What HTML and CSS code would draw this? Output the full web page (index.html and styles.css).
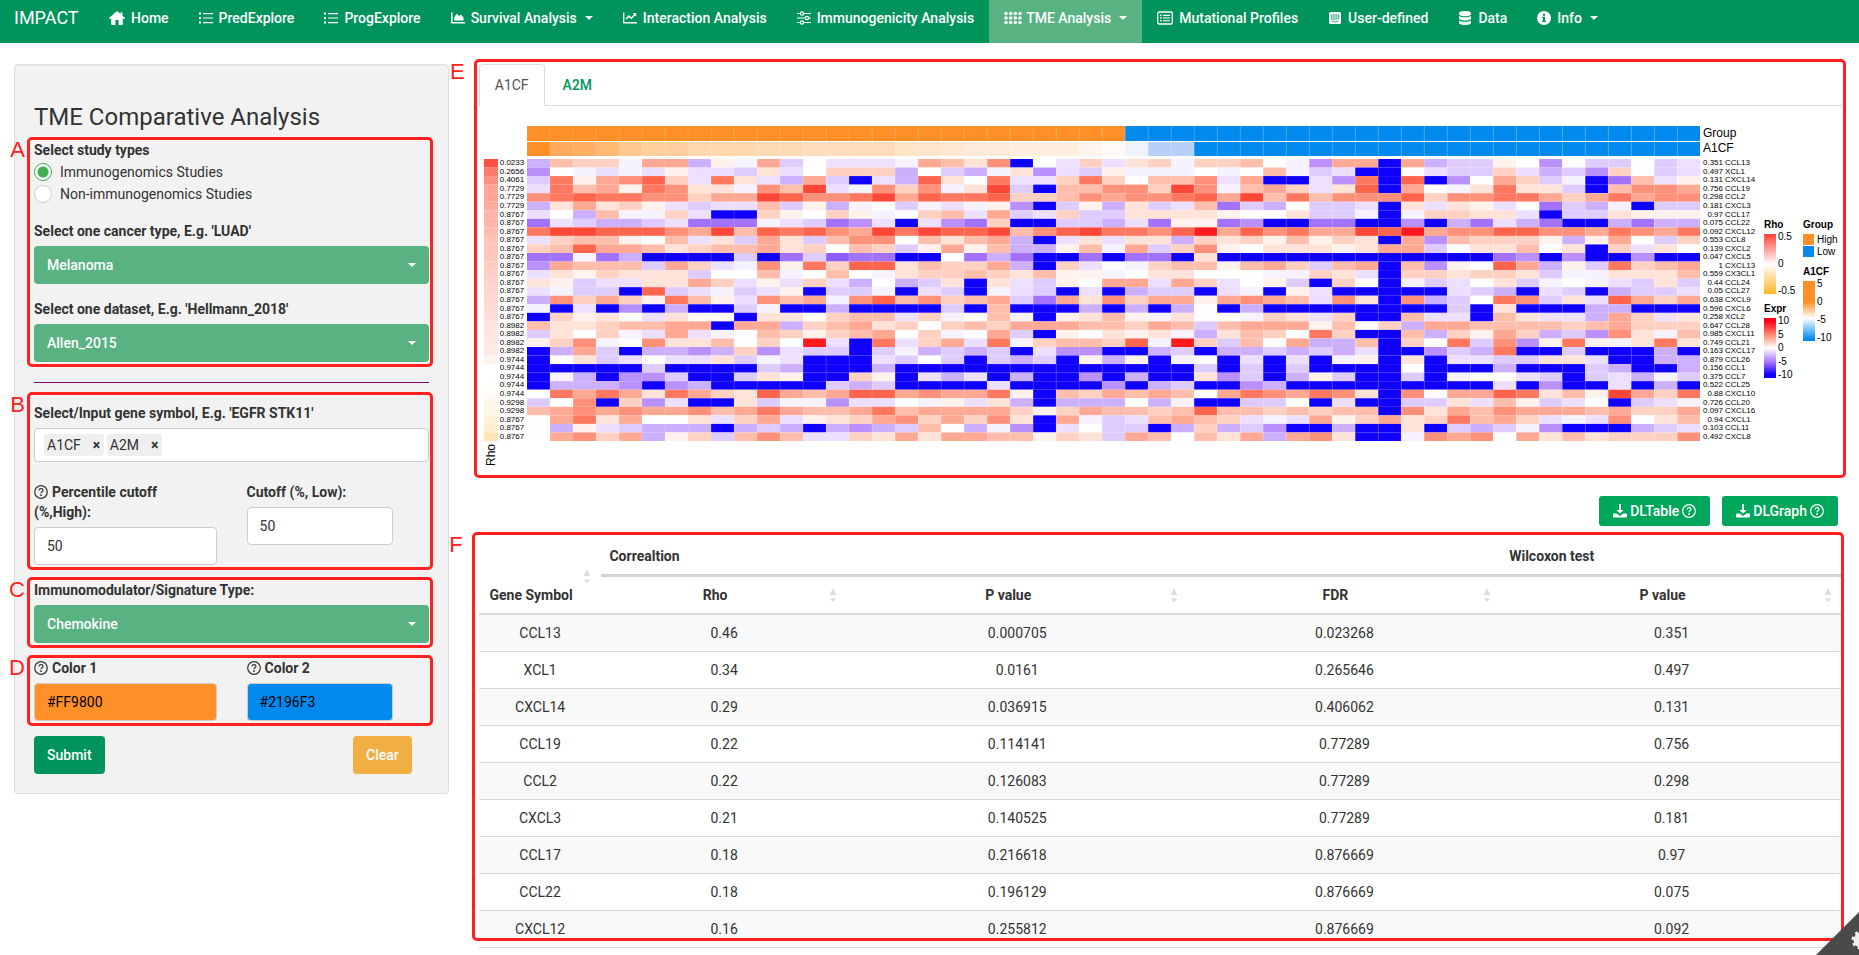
FILE: index.html
```html
<!DOCTYPE html>
<html lang="en">
<head>
<meta charset="utf-8">
<title>IMPACT - TME Comparative Analysis</title>
<link rel="stylesheet" href="styles.css">
</head>
<body>
<svg class="sprite" aria-hidden="true">
  <symbol id="i-home" viewBox="0 0 16 14"><path d="M8 0 0 7l1 1.2 1.2-1V13c0 .6.3 1 .9 1h3.3V9.6c0-.3.2-.5.5-.5h2.2c.3 0 .5.2.5.5V14h3.3c.6 0 .9-.4.9-1V7.200l1.200 1L16 7l-2.600-2.300V1.200h-1.800v1.900z"/></symbol>
  <symbol id="i-list" viewBox="0 0 14 14"><path d="M0 1.500h2v2H0zM4 2h10v1.200H4zM0 6h2v2H0zM4 6.400h10v1.200H4zM0 10.500h2v2H0zM4 11h10v1.200H4z"/></symbol>
  <symbol id="i-area" viewBox="0 0 14 14"><path d="M0 1.500h1.600v9.400H14v1.600H1c-.6 0-1-.4-1-1zM3.200 9.600V6.200l2.600-3.400 2.300 2.300 1.800-1.500 2.600 2.800v3.200z"/></symbol>
  <symbol id="i-line" viewBox="0 0 14 14"><path d="M0 1.500h1.400v9.600H14v1.400H1c-.6 0-1-.4-1-1z"/><path d="m3.200 8 2.600-3 2.400 2.200 4-4" fill="none" stroke="currentColor" stroke-width="1.500"/><path d="M9.800 2h3.400v3.400z"/></symbol>
  <symbol id="i-sliders" viewBox="0 0 14 14"><path d="M0 2.500h14M0 7h14M0 11.500h14" stroke="currentColor" stroke-width="1.200"/><g fill="#00945c" stroke="currentColor" stroke-width="1.200"><circle cx="5" cy="2.500" r="1.600"/><circle cx="10" cy="7" r="1.600"/><circle cx="5" cy="11.500" r="1.600"/></g></symbol>
  <symbol id="i-dots" viewBox="0 0 18 14"><path d="M2.200 2.500h14M2.200 7h14M2.200 11.500h14" transform="translate(-.2)" stroke="currentColor" stroke-width="3.600" stroke-linecap="round" stroke-dasharray="0 4.660"/></symbol>
  <symbol id="i-card" viewBox="0 0 16 14"><rect x=".7" y="1" width="14.600" height="12" rx="1.600" fill="none" stroke="currentColor" stroke-width="1.300"/><path d="M3 3.600h1.600v1.500H3zM6 3.800h7v1.100H6zM3 6.300h1.600v1.500H3zM6 6.500h7v1.100H6zM3 9h1.600v1.500H3zM6 9.200h7v1.100H6z"/></symbol>
  <symbol id="i-user" viewBox="0 0 12 14"><rect y="1" width="12" height="12" rx="1.600"/><path d="M2.400 3.500v5M4.200 3v6M6 3v6M7.800 3v6M9.600 3.500v5M2.500 10q3.500 2 7 0" fill="none" stroke="#00945c" stroke-width=".8"/></symbol>
  <symbol id="i-db" viewBox="0 0 12 14"><path d="M6 0c3.300 0 6 .9 6 2v1.200c0 1.100-2.700 2-6 2s-6-.9-6-2V2c0-1.100 2.700-2 6-2zM0 5c1.300.9 3.600 1.300 6 1.300S10.700 5.900 12 5v2.600c0 1.100-2.700 2-6 2s-6-.9-6-2zm0 4.400c1.300.9 3.600 1.300 6 1.300s4.700-.4 6-1.300V12c0 1.100-2.700 2-6 2s-6-.9-6-2z"/></symbol>
  <symbol id="i-info" viewBox="0 0 14 14"><circle cx="7" cy="7" r="7"/><path d="M6 2.700h2v2H6zM5.200 5.800H8v3.900h.9V11H5.100V9.700H6V7.100h-.8z" fill="#00945c"/></symbol>
  <symbol id="i-help" viewBox="0 0 14 14"><circle cx="7" cy="7" r="6.300" fill="none" stroke="currentColor" stroke-width="1.200"/><path d="M5 5.500c.1-1.200.9-1.800 2-1.800s2 .7 2 1.600c0 1.400-2 1.400-2 2.900" fill="none" stroke="currentColor" stroke-width="1.200"/><circle cx="7" cy="10.200" r=".9"/></symbol>
  <symbol id="i-down" viewBox="0 0 14 14"><path d="M6.100 0h1.800v6h2.700L7 9.700 3.400 6h2.700z"/><path d="M.8 9.500h2.700L7 12l3.500-2.500h2.700c.5 0 .8.300.8.800v2.500c0 .5-.3.800-.8.800H.8c-.5 0-.8-.3-.8-.8v-2.500c0-.5.300-.8.800-.8z"/></symbol>
  <symbol id="i-sort" viewBox="0 0 8 14"><path d="M4 0l3.500 7h-7zM.5 10.500h7L4 14z"/></symbol>
</svg>

<nav class="navbar">
  <a class="brand" href="#">IMPACT</a>
  <a class="nav-item" href="#"><svg class="ico wide"><use href="#i-home"/></svg>Home</a>
  <a class="nav-item" href="#"><svg class="ico"><use href="#i-list"/></svg>PredExplore</a>
  <a class="nav-item" href="#"><svg class="ico"><use href="#i-list"/></svg>ProgExplore</a>
  <a class="nav-item" href="#"><svg class="ico"><use href="#i-area"/></svg>Survival Analysis<span class="caret"></span></a>
  <a class="nav-item" href="#"><svg class="ico"><use href="#i-line"/></svg>Interaction Analysis</a>
  <a class="nav-item" href="#"><svg class="ico"><use href="#i-sliders"/></svg>Immunogenicity Analysis</a>
  <a class="nav-item active" href="#"><svg class="ico dots"><use href="#i-dots"/></svg>TME Analysis<span class="caret"></span></a>
  <a class="nav-item" href="#"><svg class="ico wide"><use href="#i-card"/></svg>Mutational Profiles</a>
  <a class="nav-item" href="#"><svg class="ico"><use href="#i-user"/></svg>User-defined</a>
  <a class="nav-item" href="#"><svg class="ico"><use href="#i-db"/></svg>Data</a>
  <a class="nav-item" href="#"><svg class="ico"><use href="#i-info"/></svg>Info<span class="caret"></span></a>
</nav>

<div class="page">
  <form class="sidebar" onsubmit="return false">
    <h1 class="title">TME Comparative Analysis</h1>

    <section class="block studies">
      <fieldset class="radios">
        <legend class="label">Select study types</legend>
        <label class="radio"><input type="radio" name="study" checked>Immunogenomics Studies</label>
        <label class="radio"><input type="radio" name="study">Non-immunogenomics Studies</label>
      </fieldset>
      <div class="field">
        <label class="label" for="cancer">Select one cancer type, E.g. 'LUAD'</label>
        <div class="select-wrap"><select id="cancer" class="select"><option>Melanoma</option></select></div>
      </div>
      <div class="field">
        <label class="label" for="dataset">Select one dataset, E.g. 'Hellmann_2018'</label>
        <div class="select-wrap"><select id="dataset" class="select"><option>Allen_2015</option></select></div>
      </div>
      <div class="callout"><span class="mark">A</span></div>
    </section>

    <hr class="rule">

    <section class="block genes">
      <div class="field">
        <label class="label" for="gene">Select/Input gene symbol, E.g. 'EGFR STK11'</label>
        <div class="chips">
          <span class="chip">A1CF<button type="button" class="chip-x">×</button></span>
          <span class="chip">A2M<button type="button" class="chip-x">×</button></span>
          <input id="gene" class="chip-input" type="text">
        </div>
      </div>
      <div class="pair cutoffs">
        <div><label class="label" for="high"><svg class="ico help"><use href="#i-help"/></svg>Percentile cutoff (%,High):</label><input id="high" class="input" type="text" value="50"></div>
        <div><label class="label" for="low">Cutoff (%, Low):</label><input id="low" class="input" type="text" value="50"></div>
      </div>
      <div class="callout tall"><span class="mark">B</span></div>
    </section>

    <section class="block">
      <label class="label" for="sig">Immunomodulator/Signature Type:</label>
      <div class="select-wrap"><select id="sig" class="select"><option>Chemokine</option></select></div>
      <div class="callout"><span class="mark">C</span></div>
    </section>

    <section class="block">
      <div class="pair">
        <div><label class="label" for="c1"><svg class="ico help"><use href="#i-help"/></svg>Color 1</label><input id="c1" class="input orange" type="text" value="#FF9800"></div>
        <div><label class="label" for="c2"><svg class="ico help"><use href="#i-help"/></svg>Color 2</label><input id="c2" class="input blue" type="text" value="#2196F3"></div>
      </div>
      <div class="callout"><span class="mark">D</span></div>
    </section>

    <div class="actions">
      <button class="btn submit" type="submit">Submit</button>
      <button class="btn clear" type="reset">Clear</button>
    </div>
  </form>

  <main class="main">
    <section class="plot">
      <div class="tabs"><a class="tab active" href="#">A1CF</a><a class="tab" href="#">A2M</a></div>
      <div class="chart">
        <div class="bands"><svg id="bands" viewBox="0 0 51 30" preserveAspectRatio="none"></svg></div>
        <div class="band-labels"><span>Group</span><span>A1CF</span></div>
        <div class="rho-strip"><svg id="rho" viewBox="0 0 1 33" preserveAspectRatio="none"></svg></div>
        <div class="fdr rows" id="fdr"></div>
        <div class="matrix"><svg id="matrix" viewBox="0 0 51 33" preserveAspectRatio="none"></svg></div>
        <div class="genes-col rows" id="names"></div>
        <div class="rho-label">Rho</div>
        <div class="legends">
          <div>
            <h2 class="lg-title">Rho</h2>
            <div class="scale"><div class="bar bar-rho"></div><div class="ticks"><span>0.5</span><span>0</span><span>-0.5</span></div></div>
            <h2 class="lg-title second">Expr</h2>
            <div class="scale"><div class="bar bar-expr"></div><div class="ticks"><span>10</span><span>5</span><span>0</span><span>-5</span><span>-10</span></div></div>
          </div>
          <div>
            <h2 class="lg-title">Group</h2>
            <div class="key"><i class="sw orange"></i>High</div>
            <div class="key"><i class="sw blue"></i>Low</div>
            <h2 class="lg-title second">A1CF</h2>
            <div class="scale"><div class="bar bar-gene"></div><div class="ticks"><span>5</span><span>0</span><span>-5</span><span>-10</span></div></div>
          </div>
        </div>
      </div>
      <div class="callout plot-box"><span class="mark">E</span></div>
    </section>

    <div class="downloads">
      <button class="dl" type="button"><svg class="ico"><use href="#i-down"/></svg>DLTable<svg class="ico"><use href="#i-help"/></svg></button>
      <button class="dl" type="button"><svg class="ico"><use href="#i-down"/></svg>DLGraph<svg class="ico"><use href="#i-help"/></svg></button>
    </div>

    <section class="results">
      <table class="table">
        <colgroup><col class="w-gene"><col class="w-rho"><col class="w-p"><col class="w-fdr"><col class="w-wp"></colgroup>
        <thead>
          <tr><th rowspan="2" class="bottom">Gene Symbol<svg class="sort"><use href="#i-sort"/></svg></th><th colspan="3" class="group">Correaltion</th><th class="group">Wilcoxon test</th></tr>
          <tr><th>Rho<svg class="sort"><use href="#i-sort"/></svg></th><th>P value<svg class="sort"><use href="#i-sort"/></svg></th><th>FDR<svg class="sort"><use href="#i-sort"/></svg></th><th>P value<svg class="sort"><use href="#i-sort"/></svg></th></tr>
        </thead>
        <tbody>
          <tr><td>CCL13</td><td>0.46</td><td>0.000705</td><td>0.023268</td><td>0.351</td></tr>
          <tr><td>XCL1</td><td>0.34</td><td>0.0161</td><td>0.265646</td><td>0.497</td></tr>
          <tr><td>CXCL14</td><td>0.29</td><td>0.036915</td><td>0.406062</td><td>0.131</td></tr>
          <tr><td>CCL19</td><td>0.22</td><td>0.114141</td><td>0.77289</td><td>0.756</td></tr>
          <tr><td>CCL2</td><td>0.22</td><td>0.126083</td><td>0.77289</td><td>0.298</td></tr>
          <tr><td>CXCL3</td><td>0.21</td><td>0.140525</td><td>0.77289</td><td>0.181</td></tr>
          <tr><td>CCL17</td><td>0.18</td><td>0.216618</td><td>0.876669</td><td>0.97</td></tr>
          <tr><td>CCL22</td><td>0.18</td><td>0.196129</td><td>0.876669</td><td>0.075</td></tr>
          <tr><td>CXCL12</td><td>0.16</td><td>0.255812</td><td>0.876669</td><td>0.092</td></tr>
        </tbody>
      </table>
      <div class="callout table-box"><span class="mark">F</span></div>
    </section>
  </main>
</div>

<svg class="corner" viewBox="0 0 43 43"><path d="M43 0v43H0z" fill="#4a4a4a"/><circle cx="45" cy="28" r="7.500" fill="#f0f0f0"/><circle cx="45" cy="28" r="8" fill="none" stroke="#f0f0f0" stroke-width="3" stroke-dasharray="3.140"/></svg>

<script src="chart.js"></script>
</body>
</html>
```
FILE: styles.css
```css
* { box-sizing: border-box; }
body { margin: 0; background: #fff; color: #333; font: 14px/20px Roboto, "Noto Sans", sans-serif; }
a { text-decoration: none; }
button, input, select { font: inherit; }
.sprite { position: absolute; width: 0; height: 0; }
.ico { width: 14px; height: 14px; fill: currentColor; flex: none; overflow: visible; }
.ico.wide { width: 16px; }
.ico.dots { width: 18px; }

/* navigation */
.navbar { display: flex; height: 43px; background: #00945c; color: #fff; }
.brand { width: 94px; padding: 8px 0 0 14px; color: #fff; font-size: 18px; }
.nav-item { display: flex; align-items: center; gap: 6px; height: 43px; padding: 0 15px 7px; color: #fff; font-weight: 500; white-space: nowrap; }
.nav-item.active { background: #58b282; }
.nav-item .dots { margin-right: -2px; }
.caret { border: 4px solid transparent; border-top-color: currentColor; border-bottom: 0; margin-left: 2px; }

.page { display: grid; grid-template-columns: 435fr 1364fr; gap: 30px; align-items: start; padding: 21px 17px 0 14px; }

/* sidebar form */
.sidebar { padding: 19px; border: 1px solid #ddd; border-radius: 4px; background: #f2f2f2; box-shadow: inset 0 1px 1px rgba(0, 0, 0, .05); }
.title { margin: 20px 0 10px; font-size: 24px; line-height: 26px; font-weight: 400; }
.block { position: relative; margin-bottom: 15px; }
.field { margin-bottom: 15px; }
.studies .field:last-of-type { margin-bottom: 0; }
.label { display: block; margin-bottom: 5px; padding: 0; font-weight: 700; }
.radios { margin: 0 0 15px; padding: 0; border: 0; }
.radios .label { margin-bottom: 2px; }
.radio { display: flex; align-items: center; gap: 8px; height: 20px; margin-bottom: 2px; }
.radio input { appearance: none; width: 18px; height: 18px; margin: 0; border: 1px solid #ccc; border-radius: 50%; background: #fff; }
.radio input:checked { border: 1px solid #43ac54; background: radial-gradient(circle, #43ac54 5px, #fff 6px); }
.select-wrap { position: relative; }
.select-wrap::after { content: ""; position: absolute; right: 13px; top: 17px; border: 4px solid transparent; border-top-color: #fff; border-bottom: 0; pointer-events: none; }
.select { appearance: none; display: block; width: 100%; height: 38px; padding: 0 13px; border: 0; border-radius: 4px; background: #58b282; color: #fff; font-weight: 500; }
.rule { margin: 20px 0; border: 0; border-top: 1px solid #800080; }
.chips { display: flex; gap: 3px; height: 34px; padding: 5px 9px; border: 1px solid #ccc; border-radius: 4px; background: #fff; }
.chip { display: flex; align-items: center; gap: 11px; height: 22px; padding: 0 3px; border-radius: 3px; background: #efefef; }
.chip-x { padding: 0; width: 9px; border: 0; background: none; color: #333; font-weight: 700; line-height: 20px; }
.chip-input { flex: 1; min-width: 0; border: 0; outline: 0; }
.genes .field { margin-bottom: 20px; }
.pair { display: grid; grid-template-columns: 183fr 147fr; gap: 30px; margin-right: 9%; }
.help { margin-right: 4px; vertical-align: -2px; }
.input { display: block; width: 100%; height: 38px; padding: 0 12px; border: 1px solid #ccc; border-radius: 4px; background: #fff; color: #333; }
.orange { background: #ff9028; color: #000; }
.blue { background: #008aee; color: #000; }
.actions { display: flex; justify-content: space-between; padding-right: 17px; }
.btn { height: 38px; padding: 0 13px; border: 0; border-radius: 4px; color: #fff; font-weight: 500; }
.submit { background: #00945c; }
.clear { background: #f0ae43; }

/* red annotation frames */
.callout { position: absolute; inset: -3px -4px -5px -7px; border: 3px solid #ff2020; border-radius: 5px; pointer-events: none; }
.callout.tall { top: -11px; }
.callout.plot-box { inset: -5px -4px -6px -5px; }
.callout.table-box { inset: -6px -2px 7px -7px; }
.mark { position: absolute; right: 100%; top: -3px; margin-right: 5px; color: #ff2020; font: 22px/26px "Liberation Sans", sans-serif; }
.plot-box .mark, .table-box .mark { margin-right: 12px; }

/* heatmap */
.main { min-width: 0; }
.plot { position: relative; }
.tabs { display: flex; height: 42px; border-bottom: 1px solid #ddd; }
.tab { padding: 11px 18px; color: #00945c; font-weight: 500; }
.tab.active { height: 42px; padding: 10px 15px; border: 1px solid #ddd; border-bottom: 0; border-radius: 4px 4px 0 0; background: #fff; color: #555; font-weight: 400; }
.chart { display: grid; grid-template-columns: 14px 29px 1fr 64px 78px; grid-template-rows: 30px 282px 28px; row-gap: 3px; padding: 20px 0 0 5px; color: #000; font-family: "Liberation Sans", sans-serif; }
.chart svg { display: block; width: 100%; height: 100%; }
.bands { grid-area: 1 / 3; }
.band-labels { grid-area: 1 / 4; display: grid; padding-left: 3px; font-size: 12px; line-height: 15px; }
.rho-strip { grid-area: 2 / 1; }
.fdr { grid-area: 2 / 2; padding-left: 2px; }
.matrix { grid-area: 2 / 3; }
.genes-col { grid-area: 2 / 4; padding-left: 3px; }
.rows { display: grid; grid-template-rows: repeat(33, 1fr); align-items: center; font-size: 8px; line-height: 8px; white-space: nowrap; }
.row { display: flex; gap: 2px; }
.num { flex: none; width: 20px; text-align: right; }
.rho-label { grid-area: 3 / 1; place-self: start center; writing-mode: vertical-rl; transform: rotate(180deg); font-size: 12px; line-height: 14px; }
.legends { grid-area: 1 / 5 / 4 / 6; display: grid; grid-template-columns: 39px 1fr; padding-top: 93px; font-size: 10px; line-height: 12px; }
.lg-title { margin: 0 0 3px; font-size: 10px; line-height: 12px; }
.second { margin-top: 9px; }
.scale { display: flex; gap: 2px; }
.bar { width: 12px; height: 60px; }
.bar-rho { background: linear-gradient(#ff4038, #fff 50%, #ffb626); }
.bar-expr { background: linear-gradient(#ff0018 5%, #ff8c70 28%, #fff 50%, #9e6cff 75%, #1000ff 94%); }
.bar-gene { background: linear-gradient(#ff9028 35%, #fff 62%, #008aee 97%); }
.ticks { display: flex; flex-direction: column; justify-content: space-between; height: 66px; margin: -3px 0; }
.key { display: flex; align-items: center; gap: 3px; height: 11px; margin-bottom: 1px; }
.sw { width: 11px; height: 11px; }

.downloads { display: flex; justify-content: flex-end; gap: 12px; margin: 24px 4px 12px 0; }
.dl { display: flex; align-items: center; gap: 3px; height: 30px; padding: 0 14px; border: 0; border-radius: 3px; background: #00a65a; color: #fff; font-weight: 500; }

/* results table */
.results { position: relative; }
.table { width: 100%; table-layout: fixed; border-collapse: separate; border-spacing: 0; }
.w-gene { width: 121px; }
.w-rho { width: 18%; }
.w-p { width: 25%; }
.w-fdr { width: 23%; }
.w-wp { width: 25%; }
.table th { position: relative; height: 38px; padding: 8px 26px 8px 8px; border-bottom: 2px solid #d9d9d9; text-align: center; white-space: nowrap; }
.table th.group { height: 39px; border-bottom: 3px solid #d5d5d5; text-align: left; }
.table th.bottom { vertical-align: bottom; }
.table td { padding: 8px; border-bottom: 1px solid #d9d9d9; text-align: center; }
.table tbody tr:nth-child(odd) { background: #f9f9f9; }
.sort { position: absolute; right: 10px; top: calc(50% - 7px); width: 8px; height: 14px; fill: #ddd; }

.corner { position: fixed; right: 0; bottom: 0; width: 43px; height: 43px; }
```
FILE: chart.js
```js
// Expression levels: Z = minimum, f..a/A = purple shades, 0 = neutral, 1..9/X = red shades
const palette = {
  Z: '#1000ff', f: '#8c5cff', e: '#a272fc', d: '#b990fc', c: '#ccb0fe', b: '#dfccff', a: '#ecdfff', A: '#f7f2ff',
  0: '#fffefe', 1: '#fff2ed', 2: '#ffe2d8', 3: '#ffd1c3', 4: '#ffbeac', 5: '#ffa994', 6: '#ff907a',
  7: '#ff785f', 8: '#ff644c', 9: '#ff4737', X: '#ff1a20'
};

// FDR, Wilcoxon p, gene, one letter per sample
const rows = [
  ['0.0233', '0.351', 'CCL13', 'c433A55c1A5b0aaaA5426Z0a3a23A3340Ad55Z5cbb10d0bb0ba'],
  ['0.2656', '0.497', 'XCL1', 'd0AaAa1aab2a0333c0bcA2dab1AAA0A04AbaZZ0abb3acbd30ba'],
  ['0.4061', '0.131', 'CXCL14', 'b715683a72ac5bZac8207aa3730446a5ZZad7Z8Zd053bAZe4a1'],
  ['0.7729', '0.756', 'CCL19', 'a74517622A649aA636A29bZ4466396A453a28Z50A2722bZ4665'],
  ['0.7729', '0.298', 'CCL2', '678776635598667958778334656678594746668366775357566'],
  ['0.7729', '0.181', 'CXCL3', 'c25231abaa4b1cA0bAaA1dZb1c2ba4ebc0bbaZ2a21a0ebcAZbb'],
  ['0.8767', '0.97', 'CCL17', 'a0c4AA3aZZ31031A034a5ba3bb22221002bbAZA3322aZbb2111'],
  ['0.8767', '0.075', 'CCL22', 'eabccbaeeeAabedaZade3ZZbbcae11edZZeeZZdZceaceZZcecc'],
  ['0.8767', '0.092', 'CXCL12', '79988865948786597988946897768X58675598X566886657657'],
  ['0.8767', '0.553', 'CCL8', 'a344104a2b52b46604245cZa2a22c32314132Z5d43331c150b3'],
  ['0.8767', '0.139', 'CXCL2', '3485542344523043b1514cc14A5b36102221255b022402Z3a20'],
  ['0.8767', '0.047', 'CXCL5', 'eeAecZZZZbZebfeeZZ0eceZZeZeeZ2ZZZZZZZZZZZZedZdZZdZZ'],
  ['0.8767', '1', 'CXCL13', 'd5444b53aA61738824335cZ3a0A3441453b45Z4d1085c1b7345'],
  ['0.8767', '0.559', 'CX3CL1', 'a213222b004A040A233432411A022000AA32aZ332332bAA2224'],
  ['0.8767', '0.44', 'CCL24', '21baa2253a1a3ac0cb2Z2ab1055a53a01bZ30ZAba02bA0Aab2b'],
  ['0.8767', '0.05', 'CCL27', 'aAbbZ8baAba1ZbbAZabZAabZaZcbbZaAZ1aZZZZZabcZabZcbba'],
  ['0.8767', '0.638', 'CXCL9', 'c63531741a645A6846345be52635515654a62Z6cb076b2a8535'],
  ['0.8767', '0.596', 'CXCL6', 'AZaZdZcZZbAZZcZZZZbZ4ZZZcZcZc0ZcZZZZZZZZbZ2ZZZccZZZ'],
  ['0.8767', '0.258', 'XCL2', 'Z3120a200Z220344a3A04AZ1241A200A32a3ZZ4aaZ42aac53a2'],
  ['0.8982', '0.647', 'CCL28', '42234455Z55c34523034355544354b45551403c554444345333'],
  ['0.8982', '0.985', 'CXCL11', 'b203Aa5aA043134503A05bZ10212Ac243073ZZ4c3153cbd62A4'],
  ['0.8982', '0.749', 'CCL21', '136A06224030XaZ7a35a7A34438AX3b405cc4Z307b6d171A272'],
  ['0.8982', '0.163', 'CXCL17', 'Zc5bZccdc3dabbZbAcbcbZaddZZcbZccbcbcaZZdbc7ZZbZZZcZ'],
  ['0.9744', '0.879', 'CCL26', 'Z02ba0aa2bAaZZZab0bZbcbZ1c1ZA0ZaZaZA1Z2Zaabb22aZZcc'],
  ['0.9744', '0.156', 'CCL1', 'ZZZZZbZZZZbcZZZcZZZZZZZZZZZZZbZbZbZZZZ0ZZZcZZZbcZZc'],
  ['0.9744', '0.375', 'CCL7', 'ZAcZddbZZb21ZZ31ZacaZcZZdZcZZ2dbZc1bZZbZA00abZbacAb'],
  ['0.9744', '0.522', 'CCL25', 'ZcccdZdcZZZZZbcbZZZZaZZZZdZcbZZdcZZZZZZZZZaZdZZaZcZ'],
  ['0.9744', '0.88', 'CXCL10', '0757527532854588565571Z43545405765762Z6055872419537'],
  ['0.9298', '0.726', 'CCL20', 'b06Z3daZZ2bAAdaa0A1a2cZccc0cAZZbb0ZaZZbb2a41ba0ZbaA'],
  ['0.9298', '0.097', 'CXCL16', '4565655645754457455553135443484434344Z6254655545335'],
  ['0.8767', '0.94', 'CXCL1', '05725002a35a1235635362Z5Aba4543aAa5135237453aAa6024'],
  ['0.8767', '0.103', 'CCL11', '0c1abcccZcbcZcdcb40cAdZa0bbZc3cbdZZcZZ2ZbcbAdZZZcba'],
  ['0.8767', '0.492', 'CXCL8', '05635c13b464aa32525544132b540425c562ZZA656052423336']
];

const rhoColors = ['#ff5045', '#ff7a6c', '#ff8f80', '#ffa598', '#ffa598', '#ffaca0', '#ffb5a8', '#ffb5a8', '#ffbbb0',
  '#ffc3b9', '#ffc5bc', '#ffc8bf', '#ffcbc2', '#ffcec6', '#ffd2ca', '#ffd5ce', '#ffd8d1', '#ffdad4', '#ffdcd7',
  '#ffe3de', '#ffe5e1', '#ffe7e3', '#ffe9e5', '#fff3f0', '#fff', '#fff', '#fffefb', '#fffdf7', '#fff8ea', '#fff7e5',
  '#fff1d8', '#ffeecd', '#ffe5b5'];

const geneBand = ['#ff9028', '#ffaa5c', '#ffad60', '#ffb972', '#ffc890', '#ffcf9c', '#ffd09f', '#ffd8ae', '#ffd8ae',
  '#ffd8ae', '#ffdbb5', '#ffdbb5', '#ffddbd', '#ffddbd', '#ffddbd', '#ffddb9', '#ffe4c8', '#ffe5cb', '#ffe8d2',
  '#ffebd8', '#ffebd8', '#ffefe0', '#ffefe0', '#ffefe0', '#fff5ec', '#fffaf5', '#eef3fd', '#b8d0f8', '#b8d0f8'];

const SVG = 'http://www.w3.org/2000/svg';
const COLS = 51;

function rect(parent, x, y, w, h, fill) {
  const r = document.createElementNS(SVG, 'rect');
  const attrs = { x, y, width: w, height: h, fill };
  for (const k in attrs) r.setAttribute(k, attrs[k]);
  parent.append(r);
}

function seams(parent, height) {
  const p = document.createElementNS(SVG, 'path');
  let d = '';
  for (let i = 1; i < COLS; i++) d += `M${i} 0V${height}`;
  p.setAttribute('d', d);
  p.setAttribute('stroke', '#fff');
  p.setAttribute('stroke-opacity', '.15');
  p.setAttribute('vector-effect', 'non-scaling-stroke');
  parent.append(p);
}

const $ = id => document.getElementById(id);

for (let c = 0; c < COLS; c++) {
  rect($('bands'), c, 0, 1, 15, c < 26 ? '#ff9028' : '#008aee');
  rect($('bands'), c, 16, 1, 14, geneBand[c] || '#008aee');
}
seams($('bands'), 30);

rows.forEach(([fdr, p, gene, cells], y) => {
  rect($('rho'), 0, y, 1, 1, rhoColors[y]);
  [...cells].forEach((k, x) => rect($('matrix'), x, y, 1, 1, palette[k]));
  const f = document.createElement('span');
  f.textContent = fdr;
  $('fdr').append(f);
  const row = document.createElement('div');
  row.className = 'row';
  row.innerHTML = `<span class="num">${p}</span><span>${gene}</span>`;
  $('names').append(row);
});
seams($('matrix'), 33);
```
